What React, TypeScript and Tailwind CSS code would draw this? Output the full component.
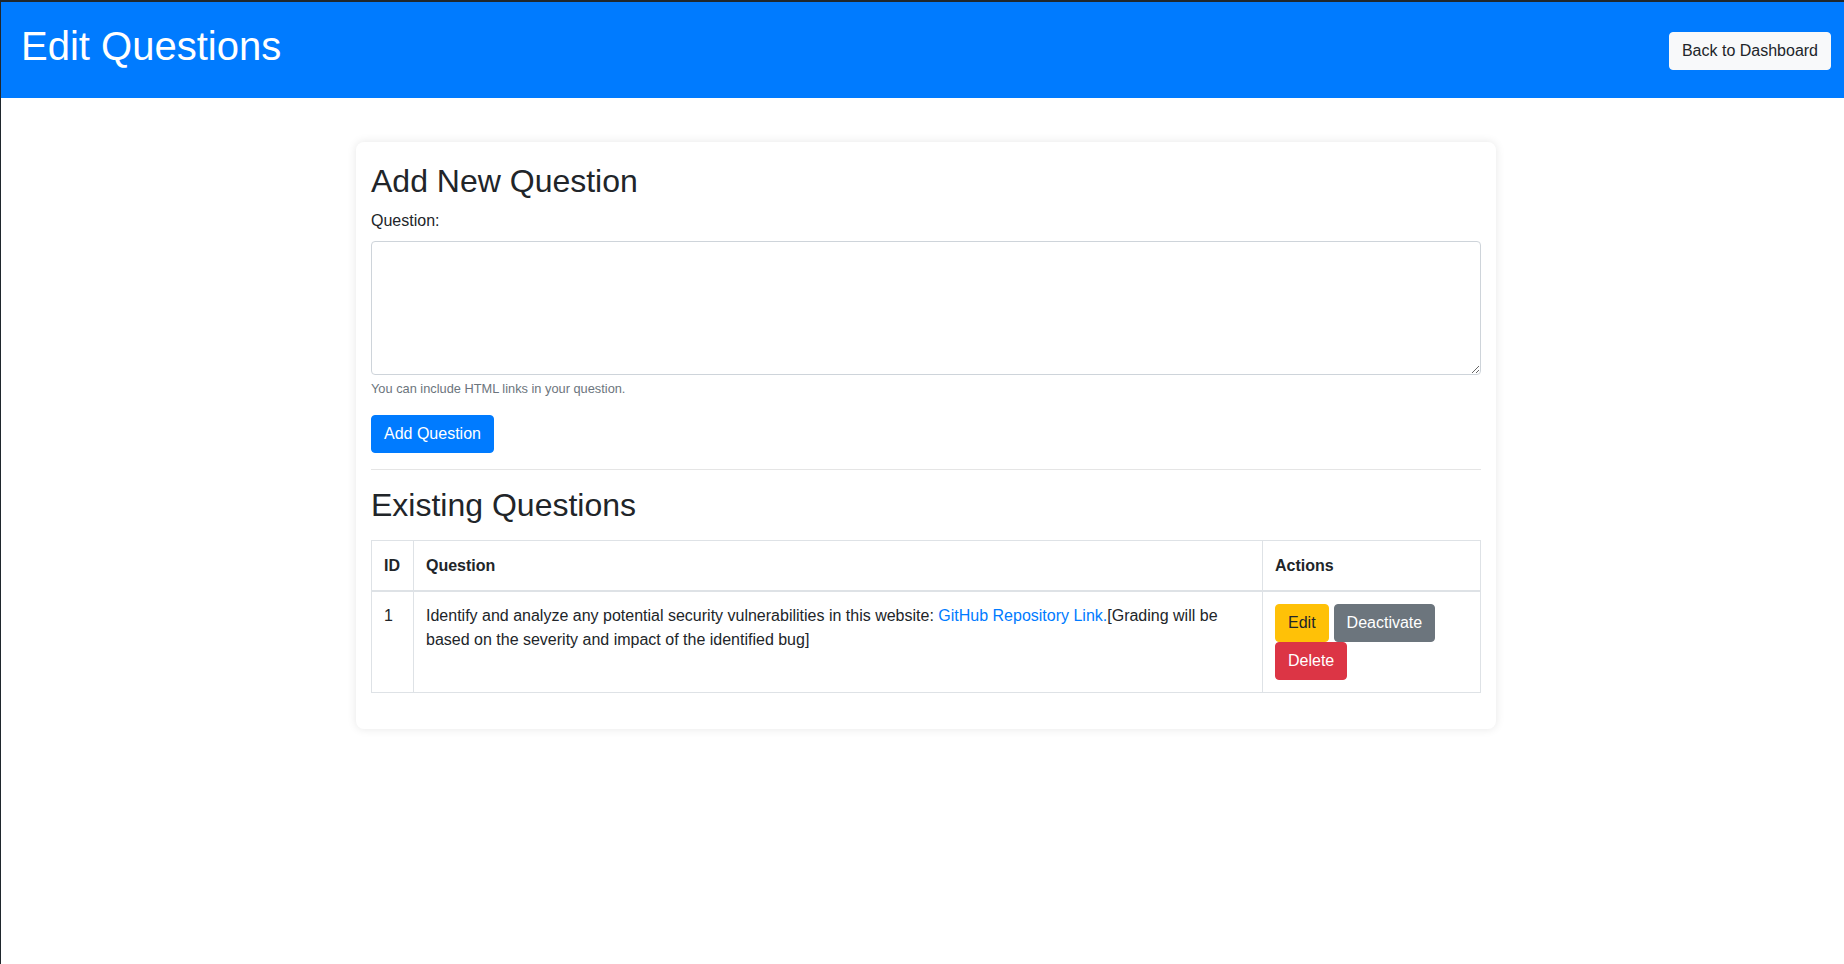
import React from 'react';

const questions = [
  {
    id: 1,
    before:
      'Identify and analyze any potential security vulnerabilities in this website: ',
    link: 'GitHub Repository Link.',
    after: '[Grading will be based on the severity and impact of the identified bug]',
  },
];

export default function App() {
  return (
    <div className="min-h-screen border-t-2 border-l border-[#1f272d] bg-white font-['Liberation_Sans',Arial,sans-serif] text-[16px] leading-6 text-[#212529]">
      {/* top bar */}
      <header className="flex items-center justify-between bg-[#007bff] py-[20px] pl-[20px] pr-[13px]">
        <h1 className="mb-2 text-[40px] leading-[1.2] font-normal text-white">
          Edit Questions
        </h1>
        <button className="mt-[1px] rounded border border-[#f8f9fa] bg-[#f8f9fa] px-3 py-[6px] text-[16px] leading-6 text-[#212529]">
          Back to Dashboard
        </button>
      </header>

      <div className="mt-[44px] flex justify-center pl-[7px]">
        <div className="w-[1140px] rounded-lg bg-white px-[15px] pt-[20px] pb-[20px] shadow-[0_0_10px_rgba(0,0,0,0.1)]">
          <h2 className="mb-[9px] text-[32px] leading-[1.2] font-normal">Add New Question</h2>

          <div className="mb-4">
            <label className="mb-2 block">Question:</label>
            <textarea
              rows={5}
              className="block h-[134px] w-full rounded border border-[#ced4da] px-3 py-[6px] text-[16px] leading-6 outline-none"
            />
            <small className="mt-1 block text-[12.8px] leading-[1.5] text-[#6c757d]">
              You can include HTML links in your question.
            </small>
          </div>

          <button className="rounded border border-[#007bff] bg-[#007bff] px-3 py-[6px] leading-6 text-white">
            Add Question
          </button>

          <hr className="my-4 border-t border-[rgba(0,0,0,0.1)]" />

          <h2 className="mb-4 text-[32px] leading-[1.2] font-normal">Existing Questions</h2>

          <table className="mb-4 w-full border-collapse border border-[#dee2e6]">
            <thead>
              <tr>
                <th className="w-[42px] border border-b-2 border-[#dee2e6] px-3 pt-[13px] pb-3 text-left align-bottom font-bold">
                  ID
                </th>
                <th className="border border-b-2 border-[#dee2e6] px-3 pt-[13px] pb-3 text-left align-bottom font-bold">
                  Question
                </th>
                <th className="w-[218px] border border-b-2 border-[#dee2e6] px-3 pt-[13px] pb-3 text-left align-bottom font-bold">
                  Actions
                </th>
              </tr>
            </thead>
            <tbody>
              {questions.map((q) => (
                <tr key={q.id}>
                  <td className="border border-[#dee2e6] p-3 align-top">{q.id}</td>
                  <td className="border border-[#dee2e6] p-3 align-top">
                    {q.before}
                    <a href="#" className="text-[#007bff]">
                      {q.link}
                    </a>
                    {q.after}
                  </td>
                  <td className="border border-[#dee2e6] p-3 align-top">
                    <div className="flex flex-wrap gap-x-[5px]">
                      <button className="rounded border border-[#ffc107] bg-[#ffc107] px-3 py-[6px] leading-6 text-[#212529]">
                        Edit
                      </button>
                      <button className="rounded border border-[#6c757d] bg-[#6c757d] px-3 py-[6px] leading-6 text-white">
                        Deactivate
                      </button>
                      <button className="rounded border border-[#dc3545] bg-[#dc3545] px-3 py-[6px] leading-6 text-white">
                        Delete
                      </button>
                    </div>
                  </td>
                </tr>
              ))}
            </tbody>
          </table>
        </div>
      </div>
    </div>
  );
}
